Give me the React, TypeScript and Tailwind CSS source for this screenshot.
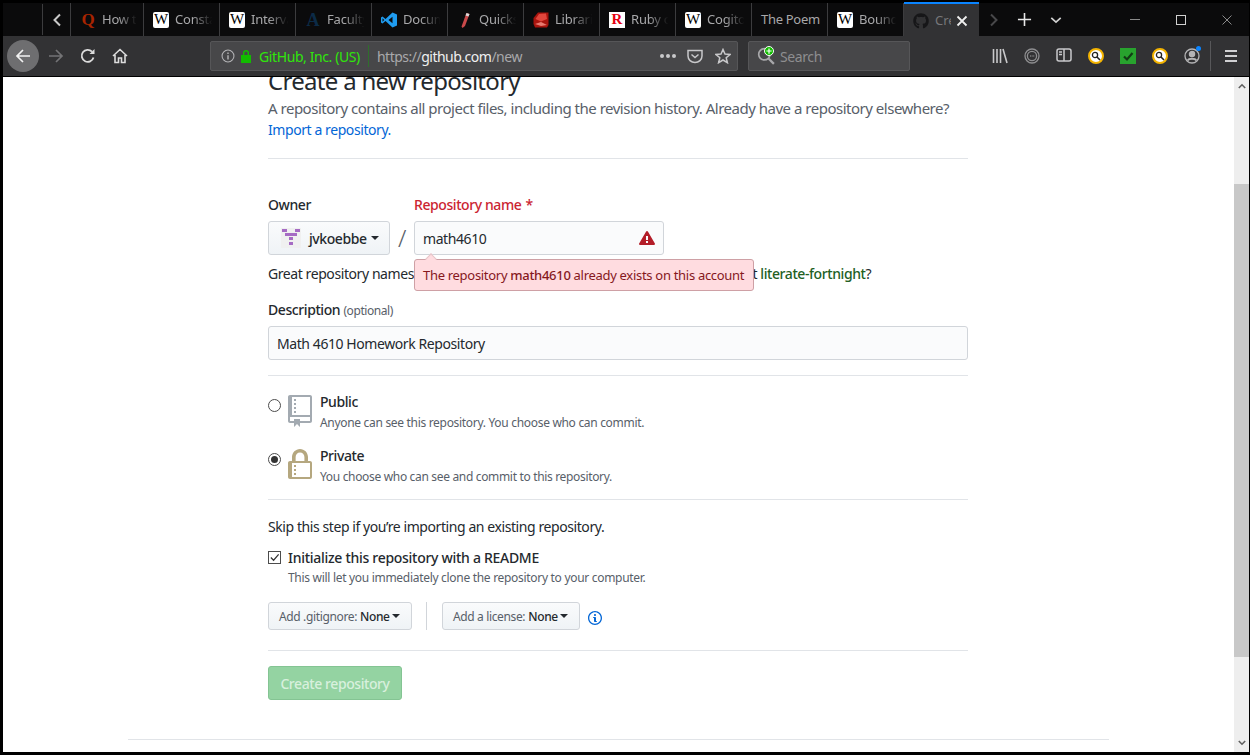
import React from "react";
import { FaGithub } from "react-icons/fa";

const tabs = [
  { title: "How to", icon: "q", width: "w-[73px]" },
  { title: "Constant", icon: "w", width: "w-[76px]" },
  { title: "Interval", icon: "w", width: "w-[76px]" },
  { title: "Faculty", icon: "a", width: "w-[76px]" },
  { title: "Documents", icon: "vs", width: "w-[76px]" },
  { title: "Quickstart", icon: "pen", width: "w-[76px]" },
  { title: "Libraries", icon: "ruby", width: "w-[76px]" },
  { title: "Ruby on", icon: "r", width: "w-[76px]" },
  { title: "Cogito", icon: "w", width: "w-[76px]" },
  { title: "The Poem", icon: "", width: "w-[76px]" },
  { title: "Boundary", icon: "w", width: "w-[76px]" },
];

const TabIcon: React.FC<{ kind: string }> = ({ kind }) => {
  if (kind === "w")
    return (
      <span className="w-4 h-4 shrink-0 rounded-[2px] bg-white text-black flex items-center justify-center font-['Liberation_Serif',serif] text-[15px] leading-none">
        W
      </span>
    );
  if (kind === "q")
    return <span className="w-4 h-4 shrink-0 text-[#a82400] flex items-center justify-center font-['Liberation_Serif',serif] font-bold text-[17px] leading-none">Q</span>;
  if (kind === "a")
    return <span className="w-4 h-4 shrink-0 text-[#0c2b47] flex items-center justify-center font-['Liberation_Serif',serif] font-bold text-[18px] leading-none">A</span>;
  if (kind === "r")
    return <span className="w-4 h-4 shrink-0 bg-white text-[#e60012] flex items-center justify-center font-['Liberation_Serif',serif] font-bold text-[15px] leading-none">R</span>;
  if (kind === "vs")
    return (
      <svg viewBox="0 0 16 16" className="w-4 h-4 shrink-0">
        <path d="M11.5 0.5L16 2.5V13.5L11.5 15.5L4.5 9L1.5 11.5L0 10.5V5.5L1.5 4.5L4.5 7L11.5 0.5ZM11.5 4.8L7.5 8L11.5 11.2V4.8ZM1.5 6.3V9.7L3.2 8L1.5 6.3Z" fill="#1f9cf0" />
      </svg>
    );
  if (kind === "pen")
    return (
      <svg viewBox="0 0 16 16" className="w-4 h-4 shrink-0">
        <path d="M9.5 1L12.5 2L8 14L5.5 16L4.5 14.5Z" fill="#c9494a" />
        <path d="M9.5 1L12.5 2L11.5 4.5L8.5 3.5Z" fill="#d9d9d9" />
      </svg>
    );
  if (kind === "ruby")
    return (
      <svg viewBox="0 0 16 16" className="w-4 h-4 shrink-0">
        <path d="M5 0.5H15.5V13L14 15.5H2L0.5 12V6Z" fill="#a8140e" />
        <path d="M6 2L13 1.5L14 7L8 9.5L2.5 7Z" fill="#e0463c" />
        <path d="M2 12L8 10L14 13L8 14Z" fill="#e77a70" />
      </svg>
    );
  return null;
};

const Tab: React.FC<{ title: string; icon: string; width: string }> = ({ title, icon, width }) => (
  <div className={`${width} h-full shrink-0 border-r border-[#3c3c3e] pl-[9px] flex items-center gap-[6px] overflow-hidden`}>
    <TabIcon kind={icon} />
    {icon ? (
      <span className="text-[13px] whitespace-nowrap overflow-hidden text-[#a8a8aa] w-full pr-[6px] tracking-[-0.2px] [mask-image:linear-gradient(to_right,black_40%,transparent_85%)]">
        {title}
      </span>
    ) : (
      <span className="text-[13px] whitespace-nowrap text-[#a8a8aa] tracking-[-0.3px]">{title}</span>
    )}
  </div>
);

const TabBar: React.FC = () => (
  <div className="h-[33px] flex items-stretch bg-[#0b0b0c] pl-[39px] shrink-0">
    <div className="w-px my-[1px] bg-[#3c3c3e]" />
    <div className="w-[28px] border-r border-[#3c3c3e] flex items-center justify-center">
      <svg viewBox="0 0 10 14" className="w-[10px] h-[14px]">
        <path d="M8 1.5L2.5 7L8 12.5" fill="none" stroke="#c8c8c8" strokeWidth="2" />
      </svg>
    </div>
    {tabs.map((t) => (
      <Tab key={t.title} title={t.title} icon={t.icon} width={t.width} />
    ))}
    <div className="w-[75px] h-[36px] -mt-[1px] bg-[#323234] border-t-2 border-[#0a84ff] pl-[9px] flex items-center gap-[6px] shrink-0 relative z-10">
      <FaGithub className="w-4 h-4 shrink-0 text-[#161618]" />
      <span className="text-[13px] text-[#77777a] w-[16px] overflow-hidden">Create</span>
      <svg viewBox="0 0 12 12" className="w-3 h-3 shrink-0 -ml-[1px]">
        <path d="M1.5 1.5L10.5 10.5M10.5 1.5L1.5 10.5" stroke="#f0f0f0" strokeWidth="1.8" />
      </svg>
    </div>
    <div className="w-[30px] flex items-center justify-center">
      <svg viewBox="0 0 10 14" className="w-[10px] h-[14px]">
        <path d="M2 1.5L7.5 7L2 12.5" fill="none" stroke="#48484a" strokeWidth="2" />
      </svg>
    </div>
    <div className="w-[30px] flex items-center justify-center">
      <svg viewBox="0 0 16 16" className="w-[15px] h-[15px]">
        <path d="M8 1V15M1 8H15" stroke="#e8e8e8" strokeWidth="1.7" />
      </svg>
    </div>
    <div className="w-[34px] flex items-center justify-center">
      <svg viewBox="0 0 14 8" className="w-3 h-2">
        <path d="M1.5 1.5L7 6.5L12.5 1.5" fill="none" stroke="#d0d0d0" strokeWidth="2" />
      </svg>
    </div>
    <div className="flex-1" />
    <div className="w-[46px] flex items-center justify-center">
      <div className="w-[10px] h-px bg-[#8a8a8a]" />
    </div>
    <div className="w-[46px] flex items-center justify-center">
      <div className="w-[10px] h-[10px] border border-[#d0d0d0]" />
    </div>
    <div className="w-[46px] -mr-px flex items-center justify-center">
      <svg viewBox="0 0 10 10" className="w-[10px] h-[10px]">
        <path d="M0.5 0.5L9.5 9.5M9.5 0.5L0.5 9.5" stroke="#8a8a8a" strokeWidth="1" />
      </svg>
    </div>
  </div>
);

const SearchLens: React.FC = () => (
  <svg viewBox="0 0 16 16" className="w-[18px] h-[18px] text-[#a8a8aa] absolute left-0 top-0" fill="none">
    <circle cx="6.5" cy="6.5" r="5" stroke="currentColor" strokeWidth="1.5" />
    <path d="M10 10L15 15" stroke="currentColor" strokeWidth="2" />
  </svg>
);

const YellowLens: React.FC = () => (
  <span className="w-4 h-4 rounded-full border-2 border-[#f4b400] bg-white flex items-center justify-center">
    <svg viewBox="0 0 10 10" className="w-[10px] h-[10px]" fill="none">
      <circle cx="4" cy="4" r="2.6" stroke="#222" strokeWidth="1.3" />
      <path d="M6 6L9 9" stroke="#222" strokeWidth="1.6" />
    </svg>
  </span>
);

const NavBar: React.FC = () => (
  <div className="h-[40px] bg-[#323234] flex items-center pl-[4px] shrink-0">
    <div className="w-8 h-8 rounded-full bg-[#6e6e70] flex items-center justify-center">
      <svg viewBox="0 0 16 16" className="w-4 h-4" fill="none" stroke="#f2f2f2" strokeWidth="1.7">
        <path d="M15 8H2M8 2L2 8L8 14" />
      </svg>
    </div>
    <div className="w-4 h-4 ml-[9px]">
      <svg viewBox="0 0 16 16" className="w-4 h-4" fill="none" stroke="#737375" strokeWidth="1.7">
        <path d="M1 8H14M8 2L14 8L8 14" />
      </svg>
    </div>
    <div className="w-4 h-4 ml-[16px]">
      <svg viewBox="0 0 16 16" className="w-4 h-4" fill="none" stroke="#dcdcdc" strokeWidth="1.8">
        <path d="M13.5 9.5A6 6 0 1 1 12 3.6" />
        <path d="M14.5 1V6H9.5Z" fill="#dcdcdc" stroke="none" />
      </svg>
    </div>
    <div className="w-4 h-4 ml-[16px]">
      <svg viewBox="0 0 16 16" className="w-4 h-4" fill="none" stroke="#dcdcdc" strokeWidth="1.6">
        <path d="M1 8L8 1.5L15 8M3 7V14.5H6.5V10H9.5V14.5H13V7" />
      </svg>
    </div>
    <div className="ml-[82px] w-[528px] h-[30px] bg-[#474749] border border-[#565658] rounded-[2px] flex items-center pl-[10px] shrink-0">
      <svg viewBox="0 0 16 16" className="w-[14px] h-[14px] shrink-0" fill="none" stroke="#b4b4b6" strokeWidth="1.2">
        <circle cx="8" cy="8" r="6.8" />
        <path d="M8 7V12M8 4V5.6" strokeWidth="1.6" />
      </svg>
      <svg viewBox="0 0 12 14" className="w-3 h-[14px] ml-[5px] shrink-0">
        <path d="M1 6H11V14H1ZM3 6V4A3 3 0 0 1 9 4V6H7.6V4A1.6 1.6 0 0 0 4.4 4V6Z" fill="#12bc00" />
      </svg>
      <span className="ml-[7px] text-[14px] text-[#30e60b] whitespace-nowrap tracking-[-0.4px]">GitHub, Inc. (US)</span>
      <div className="w-px h-[22px] bg-[#2f6f2c] ml-[8px] shrink-0" />
      <span className="ml-[8px] text-[14px] whitespace-nowrap text-[#a9a9ab] tracking-[-0.5px]">
        https://<span className="text-[#f0f0f0]">github.com</span>/new
      </span>
      <div className="flex-1" />
      <div className="flex gap-[2px] mr-[11px]">
        <span className="w-[4px] h-[4px] rounded-full bg-[#c8c8ca]" />
        <span className="w-[4px] h-[4px] rounded-full bg-[#c8c8ca]" />
        <span className="w-[4px] h-[4px] rounded-full bg-[#c8c8ca]" />
      </div>
      <svg viewBox="0 0 16 16" className="w-4 h-4 mr-[12px] shrink-0" fill="none" stroke="#c8c8ca" strokeWidth="1.5">
        <path d="M1 2.5H15V8A7 6.5 0 0 1 1 8Z" />
        <path d="M4.5 6.5L8 9.5L11.5 6.5" />
      </svg>
      <svg viewBox="0 0 16 16" className="w-4 h-4 mr-[6px] shrink-0" fill="none" stroke="#c8c8ca" strokeWidth="1.5">
        <path d="M8 1.5L10 6L15 6.5L11.2 9.7L12.4 14.7L8 12L3.6 14.7L4.8 9.7L1 6.5L6 6Z" />
      </svg>
    </div>
    <div className="ml-[10px] w-[162px] h-[30px] bg-[#474749] border border-[#565658] rounded-[2px] flex items-center pl-[8px] shrink-0">
      <span className="relative w-[18px] h-[18px] shrink-0">
        <SearchLens />
        <span className="absolute -top-[1px] left-[7px] w-[10px] h-[10px] rounded-full bg-[#12bc00] border border-white flex items-center justify-center">
          <svg viewBox="0 0 8 8" className="w-[6px] h-[6px]" stroke="#fff" strokeWidth="1.6">
            <path d="M4 0.5V7.5M0.5 4H7.5" />
          </svg>
        </span>
      </span>
      <span className="ml-[5px] text-[14px] text-[#8e8e90] tracking-[-0.4px]">Search</span>
    </div>
    <div className="ml-[82px] w-4 h-4 shrink-0">
      <svg viewBox="0 0 16 16" className="w-4 h-4" fill="none" stroke="#c8c8ca" strokeWidth="1.6">
        <path d="M1.5 1V15M5 1V15M8.5 1V15M11 1L15 15" />
      </svg>
    </div>
    <div className="ml-[16px] w-4 h-4 shrink-0">
      <svg viewBox="0 0 16 16" className="w-4 h-4" fill="none" stroke="#8e8e90" strokeWidth="1.3">
        <circle cx="8" cy="8" r="7" />
        <circle cx="8" cy="8" r="4.6" />
        <path d="M6 8H6.8M7.7 8H8.5M9.4 8H10.2" />
      </svg>
    </div>
    <div className="ml-[16px] w-4 h-4 shrink-0">
      <svg viewBox="0 0 16 14" className="w-4 h-[14px]" fill="none" stroke="#c8c8ca" strokeWidth="1.5">
        <rect x="1" y="1" width="14" height="12" rx="2" />
        <path d="M8 1V13" />
        <path d="M3 4H6M3 6.5H6" />
      </svg>
    </div>
    <div className="ml-[16px] shrink-0"><YellowLens /></div>
    <div className="ml-[16px] w-4 h-4 bg-[#28a32e] flex items-center justify-center shrink-0">
      <svg viewBox="0 0 12 12" className="w-3 h-3" fill="none" stroke="#123c15" strokeWidth="2.2">
        <path d="M2 6.5L5 9.5L10.5 3" />
      </svg>
    </div>
    <div className="ml-[16px] shrink-0"><YellowLens /></div>
    <div className="ml-[16px] w-4 h-4 relative shrink-0">
      <svg viewBox="0 0 16 16" className="w-4 h-4" fill="none" stroke="#b4b4b6" strokeWidth="1.3">
        <circle cx="8" cy="8" r="7" />
        <circle cx="8" cy="6" r="2.6" fill="#b4b4b6" />
        <path d="M3.5 12.5C5 10 11 10 12.5 12.5" strokeWidth="2" />
      </svg>
      <span className="absolute -top-[2px] -right-[1px] w-[5px] h-[5px] rounded-full bg-[#0a84ff]" />
    </div>
    <div className="ml-[10px] w-px h-[30px] bg-[#58585a] shrink-0" />
    <div className="ml-[14px] flex flex-col gap-[3px] shrink-0">
      <span className="w-3 h-[2px] bg-[#d0d0d2]" />
      <span className="w-3 h-[2px] bg-[#d0d0d2]" />
      <span className="w-3 h-[2px] bg-[#d0d0d2]" />
    </div>
  </div>
);

const Caret: React.FC<{ className?: string }> = ({ className }) => (
  <span className={`inline-block w-0 h-0 border-x-4 border-x-transparent border-t-4 border-t-[#24292e] ${className ?? ""}`} />
);

const RepoIcon: React.FC = () => (
  <svg viewBox="0 0 12 16" className="w-6 h-8 shrink-0" fill="#a3aab1">
    <path d="M4 9H3V8h1v1zm0-3H3v1h1V6zm0-2H3v1h1V4zm0-2H3v1h1V2zm8-1v12c0 .55-.45 1-1 1H6v2l-1.5-1.5L3 16v-2H1c-.55 0-1-.45-1-1V1c0-.55.45-1 1-1h10c.55 0 1 .45 1 1zm-1 10H1v2h2v-1h3v1h5v-2zm0-10H2v9h9V1z" />
  </svg>
);

const LockIcon: React.FC = () => (
  <svg viewBox="0 0 12 16" className="w-6 h-8 shrink-0" fill="#b5a77f">
    <path d="M4 13H3v-1h1v1zm8-6v7c0 .55-.45 1-1 1H1c-.55 0-1-.45-1-1V7c0-.55.45-1 1-1h1V4c0-2.19 1.8-4 4-4s4 1.81 4 4v2h1c.55 0 1 .45 1 1zM3.8 6h4.41V4c0-1.22-.98-2.2-2.2-2.2-1.22 0-2.2.98-2.2 2.2v2H3.8zM11 7H2v7h9V7zM4 8H3v1h1V8zm0 2H3v1h1v-1z" />
  </svg>
);

const RepoForm: React.FC = () => (
  <div className="w-[700px] ml-[265px] text-[14px] text-[#24292e] tracking-[-0.42px] font-['Noto_Sans',sans-serif]">
    <h1 className="text-[24px] leading-[30px] -mt-[11px] font-normal tracking-[-0.7px]">Create a new repository</h1>
    <p className="mt-[2px] text-[15px] leading-[21px] text-[#586069] tracking-[-0.49px]">
      A repository contains all project files, including the revision history. Already have a repository elsewhere?
      <br />
      <a className="text-[14px] text-[#0366d6] tracking-[-0.42px]">Import a repository.</a>
    </p>
    <div className="mt-[18px] border-t border-[#e1e4e8]" />

    <div className="mt-[36px] flex items-start">
      <div>
        <div className="font-medium leading-[20px]">Owner</div>
        <div className="mt-[6px] w-[122px] h-[34px] border border-[#d1d5da] rounded-[3px] bg-gradient-to-b from-[#fafbfc] to-[#eff3f6] flex items-center pl-[12px]">
          <span className="w-5 h-5 bg-[#f0f0f0] shrink-0">
            <svg viewBox="0 0 20 20" className="w-5 h-5" fill="#a66bc4">
              <rect x="1" y="1" width="5" height="3" />
              <rect x="14" y="1" width="5" height="3" />
              <rect x="4" y="5" width="12" height="3" />
              <rect x="8" y="9" width="4" height="3" />
              <rect x="8" y="14" width="4" height="3" />
            </svg>
          </span>
          <span className="ml-[8px] mt-px font-medium">jvkoebbe</span>
          <Caret className="ml-[4px]" />
        </div>
      </div>
      <div className="w-[24px] mt-[26px] text-center text-[24px] leading-[34px] text-[#586069] font-light">/</div>
      <div>
        <div className="font-medium leading-[20px] text-[#cb2431]">
          Repository name <span className="ml-[1px]">*</span>
        </div>
        <div className="mt-[6px] w-[250px] h-[34px] border border-[#d1d5da] rounded-[3px] bg-[#fafbfc] flex items-center justify-between pl-[8px] pr-[8px]">
          <span className="mt-px">math4610</span>
          <svg viewBox="0 0 16 16" className="w-4 h-4" fill="#b31d28">
            <path d="M8.893 1.5c-.183-.31-.52-.5-.887-.5s-.703.19-.886.5L.138 13.499a.98.98 0 0 0 0 1.001c.193.31.53.501.886.501h13.964c.367 0 .704-.19.877-.5a1.03 1.03 0 0 0 .01-1.002L8.893 1.5zm.133 11.497H6.987v-2.003h2.039v2.003zm0-3.004H6.987V5.987h2.039v4.006z" />
          </svg>
        </div>
      </div>
    </div>

    <div className="relative mt-[8px] leading-[21px] h-[21px] whitespace-nowrap">
      Great repository names <span className="tracking-[-0.5px]">are short and memorable. Need inspiration? How about </span>
      <span className="font-medium text-[#22601f]">literate-fortnight</span>?
      <div className="absolute left-[146px] -top-[4px] w-[340px] h-[32px] bg-[#ffdce0] border border-[#cea0a5] rounded-[3px] px-[8px] flex items-center text-[13px] text-[#86181d] tracking-[-0.3px]">
        <span className="absolute -top-[5px] left-[12px] w-2 h-2 rotate-45 bg-[#ffdce0] border-l border-t border-[#e5c5c8]" />
        <span>
          The repository <span className="font-medium">math4610</span> already exists on this account
        </span>
      </div>
    </div>

    <div className="mt-[15px] leading-[21px] font-medium">
      Description <span className="font-normal text-[12px] text-[#586069]">(optional)</span>
    </div>
    <div className="mt-[5px] h-[34px] border border-[#d1d5da] rounded-[3px] bg-[#fafbfc] flex items-center px-[8px]">
      <span className="mt-px">Math 4610 Homework Repository</span>
    </div>
    <div className="mt-[15px] border-t border-[#e1e4e8]" />

    <div className="mt-[18px] flex items-start h-[40px]">
      <span className="mt-[5px] w-[13px] h-[13px] rounded-full border border-[#4c4c4c] bg-white shrink-0" />
      <span className="ml-[7px] mt-[1px]"><RepoIcon /></span>
      <div className="ml-[8px] -mt-[1px]">
        <div className="font-medium leading-[18px]">Public</div>
        <div className="mt-[3px] text-[12px] leading-[18px] text-[#586069] tracking-[-0.31px]">
          Anyone can see this repository. You choose who can commit.
        </div>
      </div>
    </div>
    <div className="mt-[14px] flex items-start h-[40px]">
      <span className="mt-[5px] w-[13px] h-[13px] rounded-full border border-[#4c4c4c] bg-white shrink-0 flex items-center justify-center">
        <span className="w-[7px] h-[7px] rounded-full bg-[#333]" />
      </span>
      <span className="ml-[7px] mt-[1px]"><LockIcon /></span>
      <div className="ml-[8px] -mt-[1px]">
        <div className="font-medium leading-[18px]">Private</div>
        <div className="mt-[3px] text-[12px] leading-[18px] text-[#586069] tracking-[-0.33px]">
          You choose who can see and commit to this repository.
        </div>
      </div>
    </div>
    <div className="mt-[11px] border-t border-[#e1e4e8]" />

    <p className="mt-[16px] leading-[21px]">Skip this step if you’re importing an existing repository.</p>
    <div className="mt-[10px] flex items-start">
      <span className="mt-[4px] w-[13px] h-[13px] border border-[#4c4c4c] bg-white shrink-0 flex items-center justify-center">
        <svg viewBox="0 0 12 12" className="w-[11px] h-[11px]" fill="none" stroke="#333" strokeWidth="1.3">
          <path d="M2 6L5 9L10.5 2.5" />
        </svg>
      </span>
      <div className="ml-[7px]">
        <div className="font-medium leading-[21px] tracking-[-0.29px]">Initialize this repository with a README</div>
        <div className="mt-px text-[12px] leading-[18px] text-[#586069] tracking-[-0.3px]">
          This will let you immediately clone the repository to your computer.
        </div>
      </div>
    </div>

    <div className="mt-[15px] flex items-center h-[28px] text-[12px] tracking-[-0.36px]">
      <div className="w-[144px] h-[28px] border border-[#d1d5da] rounded-[3px] bg-gradient-to-b from-[#fafbfc] to-[#eff3f6] flex items-center pl-[10px] whitespace-nowrap">
        <span className="text-[#586069] mt-px">Add .gitignore:</span>
        <span className="ml-[3px] mt-px font-medium">None</span>
        <Caret className="ml-[2px]" />
      </div>
      <div className="ml-[14px] w-px h-[28px] bg-[#d1d5da]" />
      <div className="ml-[15px] w-[138px] h-[28px] border border-[#d1d5da] rounded-[3px] bg-gradient-to-b from-[#fafbfc] to-[#eff3f6] flex items-center pl-[10px] whitespace-nowrap">
        <span className="text-[#586069] mt-px">Add a license:</span>
        <span className="ml-[3px] mt-px font-medium">None</span>
        <Caret className="ml-[2px]" />
      </div>
      <svg viewBox="0 0 14 16" className="ml-[8px] mt-[3px] w-[14px] h-4" fill="#0366d6">
        <path d="M6.3 5.69a.942.942 0 0 1-.28-.7c0-.28.09-.52.28-.7.19-.18.42-.28.7-.28.28 0 .52.09.7.28.18.19.28.42.28.7 0 .28-.09.52-.28.7a1 1 0 0 1-.7.3c-.28 0-.52-.11-.7-.3zM8 7.99c-.02-.25-.11-.48-.31-.69-.2-.19-.42-.3-.69-.31H6c-.27.02-.48.13-.69.31-.2.2-.3.44-.31.69h1v3c.02.27.11.5.31.69.2.2.42.31.69.31h1c.27 0 .48-.11.69-.31.2-.19.3-.42.31-.69H8V7.98v.01zM7 2.3c-3.14 0-5.7 2.54-5.7 5.68 0 3.14 2.56 5.7 5.7 5.7s5.7-2.55 5.7-5.7c0-3.15-2.56-5.69-5.7-5.69v.01zM7 .98c3.86 0 7 3.14 7 7s-3.14 7-7 7-7-3.12-7-7 3.14-7 7-7z" />
      </svg>
    </div>
    <div className="mt-[20px] border-t border-[#e1e4e8]" />
    <div className="mt-[15px] w-[134px] h-[34px] rounded-[3px] bg-[#94d3a2] border border-[#84c493] flex items-center justify-center font-medium text-[#d8f0dd]">
      Create repository
    </div>
  </div>
);

const Scrollbar: React.FC = () => (
  <div className="w-[15px] bg-[#eeeeee] flex flex-col shrink-0">
    <div className="h-[107px] flex items-start justify-center pt-[6px]">
      <svg viewBox="0 0 10 7" className="w-[8px] h-[6px]" fill="none" stroke="#606060" strokeWidth="2">
        <path d="M1 6L5 2L9 6" />
      </svg>
    </div>
    <div className="h-[473px] bg-[#c8c8c8]" />
    <div className="flex-1 flex items-end justify-center pb-[6px]">
      <svg viewBox="0 0 10 7" className="w-[8px] h-[6px]" fill="none" stroke="#606060" strokeWidth="2">
        <path d="M1 1L5 5L9 1" />
      </svg>
    </div>
  </div>
);

export default function App() {
  return (
    <div className="w-[1250px] h-[755px] bg-black pt-[3px] pl-[3px] pr-px pb-[3px] flex flex-col overflow-hidden font-['Noto_Sans',sans-serif]">
      <TabBar />
      <NavBar />
      <div className="h-px bg-black shrink-0" />
      <div className="flex-1 flex min-h-0 bg-white">
        <div className="flex-1 overflow-hidden">
          <RepoForm />
          <div className="mt-[39px] mx-[125px] border-t border-[#e1e4e8]" />
        </div>
        <Scrollbar />
      </div>
    </div>
  );
}
